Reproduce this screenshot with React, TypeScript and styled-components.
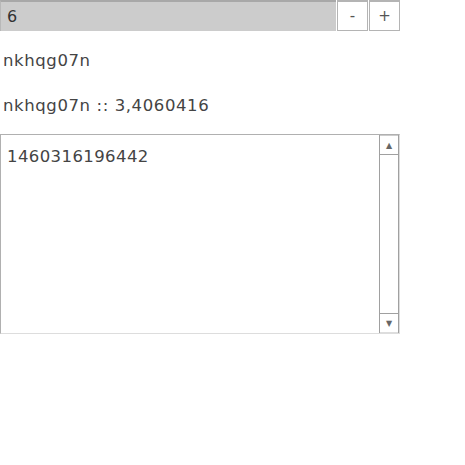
import React from 'react';
import styled, {createGlobalStyle} from 'styled-components';

const GlobalStyle = createGlobalStyle`
  body {
    margin: 0;
    background: #ffffff;
    font-family: "DejaVu Sans", sans-serif;
    color: #444444;
  }
`;

const Root = styled.div`
  width: 400px;
  display: flex;
  flex-direction: column;
`;

const Toolbar = styled.div`
  display: flex;
  height: 31px;
`;

const Field = styled.div`
  flex: 1;
  background: #cccccc;
  border-top: 2px solid #a8a8a8;
  border-left: 1px solid #b8b8b8;
  display: flex;
  align-items: center;
  padding-left: 6px;
  font-size: 16px;
  color: #333333;
`;

const StepButton = styled.div`
  width: 29px;
  margin-left: 1px;
  border: 1px solid #b4b4b4;
  border-top-width: 2px;
  background: #ffffff;
  display: flex;
  align-items: center;
  justify-content: center;
  font-size: 15px;
  color: #555555;
`;

const Line = styled.div<{$top: number}>`
  margin-top: ${p => p.$top}px;
  padding-left: 3px;
  font-size: 16.5px;
  letter-spacing: 0.6px;
  line-height: 20px;
`;

const TextBox = styled.div`
  margin-top: 18px;
  height: 200px;
  border: 1px solid #b0b0b0;
  border-bottom-color: #dddddd;
  border-right-color: #dddddd;
  display: flex;
  box-sizing: border-box;
`;

const TextContent = styled.div`
  flex: 1;
  padding: 12px 6px;
  font-size: 16.5px;
  letter-spacing: 0.4px;
  color: #444444;
`;

const Scrollbar = styled.div`
  width: 18px;
  border-left: 1px solid #a0a0a0;
  border-right: 1px solid #a0a0a0;
  display: flex;
  flex-direction: column;
  background: #ffffff;
`;

const ArrowButton = styled.div`
  height: 18px;
  display: flex;
  align-items: center;
  justify-content: center;
  border-top: 1px solid #cccccc;
  border-bottom: 1px solid #a0a0a0;
  font-size: 8px;
  color: #666666;

  &:last-child {
    border-top: 1px solid #a0a0a0;
    border-bottom: 1px solid #dddddd;
  }
`;

const Track = styled.div`
  flex: 1;
`;

const App: React.FC = () => {
  return (
    <Root>
      <GlobalStyle />
      <Toolbar>
        <Field>6</Field>
        <StepButton>-</StepButton>
        <StepButton>+</StepButton>
      </Toolbar>
      <Line $top={20}>nkhqg07n</Line>
      <Line $top={25}>nkhqg07n :: 3,4060416</Line>
      <TextBox>
        <TextContent>1460316196442</TextContent>
        <Scrollbar>
          <ArrowButton>▲</ArrowButton>
          <Track />
          <ArrowButton>▼</ArrowButton>
        </Scrollbar>
      </TextBox>
    </Root>
  );
};

export default App;
